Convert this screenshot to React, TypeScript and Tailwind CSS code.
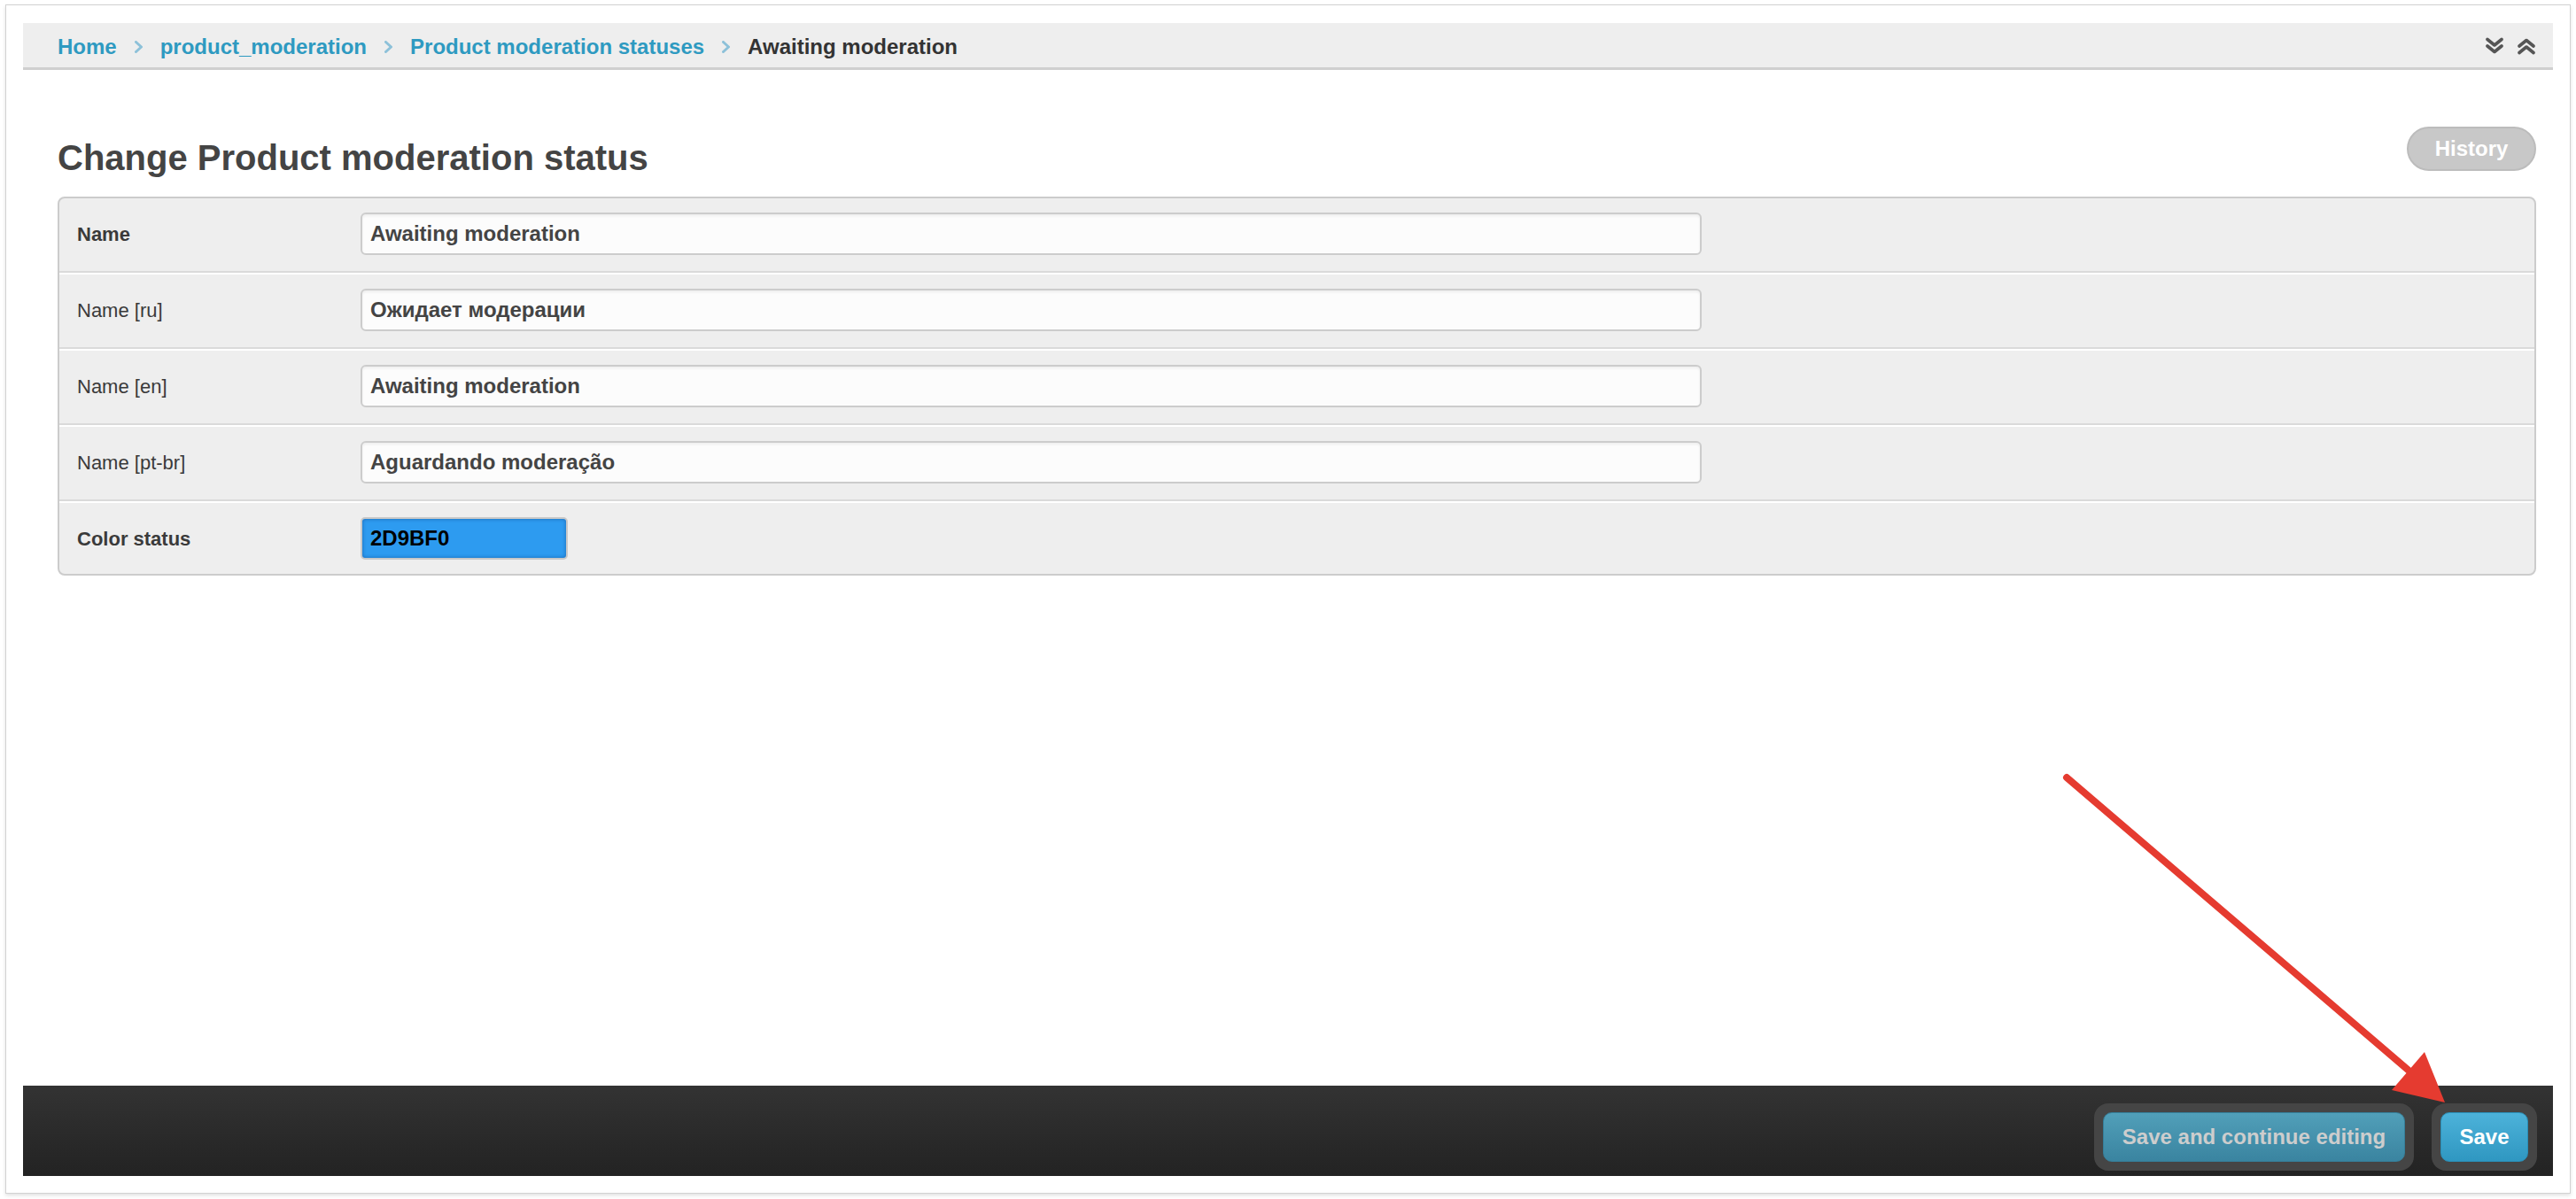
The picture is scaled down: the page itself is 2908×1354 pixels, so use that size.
import React from "react";

const FONT = "font-['Liberation_Sans',Arial,sans-serif]";

const CRUMBS = ["Home", "product_moderation", "Product moderation statuses"];

const ROWS = [
  { label: "Name", value: "Awaiting moderation", bold: true },
  { label: "Name [ru]", value: "Ожидает модерации", bold: false },
  { label: "Name [en]", value: "Awaiting moderation", bold: false },
  { label: "Name [pt-br]", value: "Aguardando moderação", bold: false },
];

const CrumbSep = () => (
  <svg width="9" height="14" viewBox="0 0 9 14" className="mx-[20px] shrink-0">
    <path d="M1.5 1.5 L7.5 7 L1.5 12.5" fill="none" stroke="#8dc1d9" strokeWidth="3" strokeLinecap="round" strokeLinejoin="round" />
  </svg>
);

const Chevrons = ({ up }: { up?: boolean }) => (
  <svg width="22" height="20" viewBox="0 0 22 20" className={up ? "rotate-180" : ""}>
    <path d="M3 2.5 L11 9 L19 2.5 M3 10 L11 16.5 L19 10" fill="none" stroke="#555" strokeWidth="3.6" strokeLinecap="round" strokeLinejoin="round" />
  </svg>
);

export default function App() {
  return (
    <div className={`relative h-[1354px] w-full overflow-hidden bg-white ${FONT}`}>
      <div className="ml-[6px] mt-[5px] flex h-[1343px] w-[2896px] flex-col border border-[#d2d2d2] bg-white px-[19px] pb-[19px] pt-[20px] shadow-[0_2px_4px_rgba(0,0,0,0.12)]">
        {/* Breadcrumbs */}
        <div className="flex h-[53px] items-start justify-between border-b-[3px] border-[#cfcfcf] bg-[#eeeeee] pl-[39px] pr-[19px]">
          <div className="flex h-[50px] items-center pt-[3px] text-[24px] font-bold leading-[47px]">
            {CRUMBS.map((c) => (
              <React.Fragment key={c}>
                <a className="text-[#2e9ac1]">{c}</a>
                <CrumbSep />
              </React.Fragment>
            ))}
            <span className="text-[#333]">Awaiting moderation</span>
          </div>
          <div className="flex h-[50px] items-center gap-[14px] pt-[2px]">
            <Chevrons />
            <Chevrons up />
          </div>
        </div>

        {/* Content */}
        <div className="pl-[39px] pr-[19px] pt-[64px]">
          <div className="flex items-start justify-between">
            <h1 className="mt-[15px] text-[40px] font-bold leading-[40px] text-[#444]">
              Change Product moderation status
            </h1>
            <button className="h-[50px] w-[146px] rounded-full border-2 border-[#bcbcbc] bg-[#c8c8c8] text-[24px] font-bold text-white">
              History
            </button>
          </div>

          <div className="mt-[24px] overflow-hidden rounded-[8px] border-2 border-[#cccccc] bg-[#eeeeee]">
            {ROWS.map((r, i) => (
              <div
                key={r.label}
                className={`flex items-center border-b-2 border-[#dadada] pb-[18px] pt-[16px] ${i > 0 ? "border-t-2 border-t-white" : ""}`}
              >
                <div className={`w-[340px] shrink-0 pl-[20px] text-[22px] text-[#3a3a3a] ${r.bold ? "font-bold" : ""}`}>
                  {r.label}
                </div>
                <input
                  readOnly
                  defaultValue={r.value}
                  className="h-[48px] w-[1514px] rounded-[6px] border-2 border-[#cccccc] bg-[#fcfcfc] px-[9px] text-[24px] font-bold text-[#444] shadow-[inset_0_2px_3px_rgba(0,0,0,0.06)] outline-none"
                />
              </div>
            ))}
            <div className="flex items-center border-t-2 border-white pb-[16px] pt-[16px]">
              <div className="w-[340px] shrink-0 pl-[20px] text-[22px] font-bold text-[#3a3a3a]">Color status</div>
              <input
                readOnly
                defaultValue="2D9BF0"
                className="h-[48px] w-[234px] rounded-[5px] border-2 border-[#c8c8c8] bg-[#2d9bf0] px-[9px] text-[24px] font-bold text-black shadow-[inset_0_0_4px_rgba(0,40,110,0.45)] outline-none"
              />
            </div>
          </div>
        </div>

        {/* Submit bar */}
        <div className="mt-auto flex h-[102px] items-start justify-end gap-[20px] bg-gradient-to-b from-[#333333] to-[#232323] pr-[18px] pt-[20px]">
          <div className="rounded-[16px] bg-[#454545] p-[10px]">
            <button className="h-[56px] w-[341px] rounded-[10px] border border-[#357f9a] bg-gradient-to-b from-[#519fb9] to-[#3a84a0] text-[24px] font-bold text-[#cdcdcd]">
              Save and continue editing
            </button>
          </div>
          <div className="rounded-[16px] bg-[#454545] p-[10px]">
            <button className="h-[56px] w-[99px] rounded-[10px] border border-[#2a8fb8] bg-gradient-to-b from-[#4cb2da] to-[#2f97c1] text-[24px] font-bold text-white">
              Save
            </button>
          </div>
        </div>
      </div>

      {/* Annotation arrow */}
      <svg className="pointer-events-none absolute left-0 top-0" width="2908" height="1354">
        <line x1="2333" y1="878" x2="2724" y2="1213" stroke="#e53b30" strokeWidth="8" strokeLinecap="round" />
        <polygon points="2760,1245 2737,1188 2700,1231" fill="#e53b30" />
      </svg>
    </div>
  );
}
